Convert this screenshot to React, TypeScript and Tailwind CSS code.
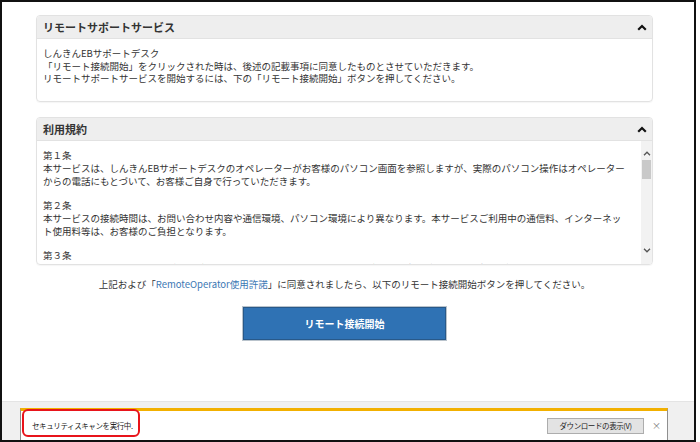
import React from 'react';

const Caret = ({ className = '' }: { className?: string }) => (
  <svg width="10" height="7" viewBox="0 0 10 7" className={className}>
    <polyline points="1.2,5.8 5,2 8.8,5.8" fill="none" stroke="#111" strokeWidth="2.2" />
  </svg>
);

const ScrollArrow = ({ up }: { up: boolean }) => (
  <svg width="8" height="5" viewBox="0 0 8 5">
    <polyline
      points={up ? '1,4.2 4,1.2 7,4.2' : '1,0.8 4,3.8 7,0.8'}
      fill="none"
      stroke="#555"
      strokeWidth="1.3"
    />
  </svg>
);

const PanelHeader = ({ title }: { title: string }) => (
  <div className="h-[23px] flex items-center justify-between pl-[6px] pr-[5px] bg-[#eeeeee] border-b border-[#e2e2e2]">
    <span className="text-[11px] font-bold text-[#333]">{title}</span>
    <Caret />
  </div>
);

const terms = [
  {
    title: '第１条',
    body: '本サービスは、しんきんEBサポートデスクのオペレーターがお客様のパソコン画面を参照しますが、実際のパソコン操作はオペレーターからの電話にもとづいて、お客様ご自身で行っていただきます。',
  },
  {
    title: '第２条',
    body: '本サービスの接続時間は、お問い合わせ内容や通信環境、パソコン環境により異なります。本サービスご利用中の通信料、インターネット使用料等は、お客様のご負担となります。',
  },
  {
    title: '第３条',
    body: '本サービスは、オペレーターがお客様のパソコン画面を参照するため、お客様の個人情報が表示される場合があります。',
  },
];

export default function App() {
  return (
    <div className="w-[700px] h-[442px] bg-white font-['Noto_Sans_CJK_JP',sans-serif] text-[#333]">
      <div className="w-[696px] h-[442px] border-2 border-[#111] flex flex-col">
        {/* page content */}
        <div className="h-[399px] bg-white pt-[13px] pl-[34px] flex flex-col">
          {/* リモートサポートサービス */}
          <div className="w-[617px] border border-[#e2e2e2] rounded-[4px] shadow-[0_1px_1px_rgba(0,0,0,0.04)] overflow-hidden">
            <PanelHeader title="リモートサポートサービス" />
            <div className="h-[62px] pt-[8px] pl-[6px] text-[9.5px] leading-[12.5px]">
              <p>しんきんEBサポートデスク</p>
              <p>「リモート接続開始」をクリックされた時は、後述の記載事項に同意したものとさせていただきます。</p>
              <p>リモートサポートサービスを開始するには、下の「リモート接続開始」ボタンを押してください。</p>
            </div>
          </div>

          {/* 利用規約 */}
          <div className="w-[617px] mt-[15px] border border-[#e2e2e2] rounded-[4px] shadow-[0_1px_1px_rgba(0,0,0,0.04)] overflow-hidden">
            <PanelHeader title="利用規約" />
            <div className="h-[123px] flex">
              <div className="flex-1 overflow-hidden pt-[8px] pl-[6px] pr-[14px] text-[9.5px] leading-[13px]">
                {terms.map((t) => (
                  <div key={t.title} className="mb-[11px]">
                    <p>{t.title}</p>
                    <p>{t.body}</p>
                  </div>
                ))}
              </div>
              <div className="w-[11px] bg-[#f2f2f2] flex flex-col items-center pt-[10px] pb-[11px]">
                <ScrollArrow up />
                <div className="w-[9px] h-[19px] mt-[4px] bg-[#c9c9c9]" />
                <div className="flex-1" />
                <ScrollArrow up={false} />
              </div>
            </div>
          </div>

          <div className="w-[617px] flex flex-col items-center">
            <p className="mt-[13px] text-[9.5px] leading-[13px] text-[#333]">
              上記および「<span className="text-[#3b78b4]">RemoteOperator使用許諾</span>」に同意されましたら、以下のリモート接続開始ボタンを押してください。
            </p>
            <button className="mt-[16px] w-[203px] h-[33px] bg-[#2f72b4] border border-[#28598a] outline outline-1 outline-[#b9c3cc] text-white text-[10px] font-bold">
              リモート接続開始
            </button>
          </div>
        </div>

        {/* download notification bar */}
        <div className="flex-1 bg-[#f0f0f0] border-t border-[#e4e4e4] pt-[6px] pl-[18px]">
          <div className="relative w-[648px] h-full bg-white border-x border-[#8f8f8f] border-t-[3px] border-t-[#f2b000] flex items-center pl-[11px] pr-[6px]">
            <span className="text-[7.5px] tracking-[-0.4px] text-[#222]">セキュリティスキャンを実行中.</span>
            <div className="flex-1" />
            <button className="w-[97px] h-[16px] bg-[#e3e3e3] border border-[#adadad] text-[7.5px] tracking-[-0.4px] text-[#222]">
              ダウンロードの表示(V)
            </button>
            <span className="ml-[8px] text-[9px] leading-none text-[#777]">×</span>
            <div className="absolute left-[1px] top-[-2px] w-[118px] h-[28px] border-2 border-[#e8141b] rounded-[6px]" />
          </div>
        </div>
      </div>
    </div>
  );
}
